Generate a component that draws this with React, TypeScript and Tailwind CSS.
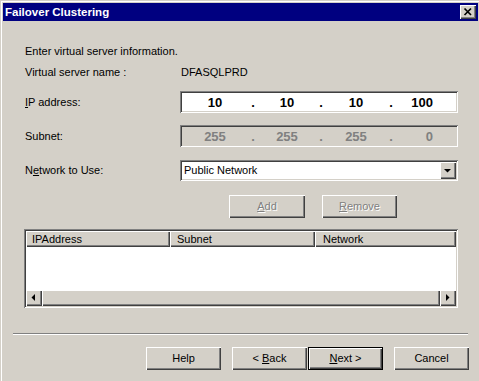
const raised = 'shadow-[inset_1px_1px_0_#fff,inset_-1px_-1px_0_#404040,inset_-2px_-2px_0_#808080]'
const sunken = 'shadow-[inset_1px_1px_0_#808080,inset_-1px_-1px_0_#fff,inset_2px_2px_0_#404040,inset_-2px_-2px_0_#d4d0c8]'
const emboss = 'text-[#808080] [text-shadow:1px_1px_0_#fff]'

function IpBox({ values, disabled }: { values: string[]; disabled?: boolean }) {
  return (
    <div
      className={`h-[22px] grid grid-cols-[66px_10px_58px_10px_60px_10px_1fr] items-center px-[2px] font-bold text-[13px] leading-none ${sunken} ${
        disabled ? 'bg-[#d4d0c8] text-[#808080]' : 'bg-white text-black'
      }`}
    >
      <span className="text-center">{values[0]}</span>
      <span className="text-center">.</span>
      <span className="text-center">{values[1]}</span>
      <span className="text-center">.</span>
      <span className="text-center">{values[2]}</span>
      <span className="text-center">.</span>
      <span className="text-right pr-[23px]">{values[3]}</span>
    </div>
  )
}

function Btn({ children, disabled, def, w = 'w-[75px]' }: { children: React.ReactNode; disabled?: boolean; def?: boolean; w?: string }) {
  const inner = (
    <div className={`h-full w-full flex items-center justify-center ${raised} ${disabled ? emboss : ''}`}>{children}</div>
  )
  if (def) return <div className={`h-[23px] ${w} border border-black`}>{inner}</div>
  return <div className={`h-[23px] ${w}`}>{inner}</div>
}

function ArrowBtn({ dir }: { dir: 'left' | 'right' | 'down' }) {
  const pts = dir === 'left' ? '9,4 9,11 5.5,7.5' : dir === 'right' ? '6,4 6,11 9.5,7.5' : '4,7 11,7 7.5,10.5'
  return (
    <div className={`w-[16px] h-full shrink-0 bg-[#d4d0c8] ${raised}`}>
      <svg width="16" height="16" viewBox="0 0 16 16" className="block">
        <polygon points={pts} fill="#000" />
      </svg>
    </div>
  )
}

export default function App() {
  return (
    <div className="w-[479px] h-[381px] overflow-hidden bg-[#d4d0c8] text-black text-[11px] leading-[13px] font-['Liberation_Sans',Arial,sans-serif] shadow-[inset_1px_1px_0_#d4d0c8,inset_2px_2px_0_#fff] flex flex-col">
      {/* title bar */}
      <div className="mt-[3px] ml-[3px] mr-[1px] h-[18px] bg-[#000080] flex items-center pl-[2px] pr-[2px]">
        <span className="text-white font-bold text-[11.5px]">Failover Clustering</span>
        <div className={`ml-auto w-[16px] h-[14px] bg-[#d4d0c8] ${raised}`}>
          <svg width="16" height="14" viewBox="0 0 16 14" className="block">
            <path d="M4.5 3.5 L11 10 M11 3.5 L4.5 10" stroke="#000" strokeWidth="1.7" />
          </svg>
        </div>
      </div>

      <div className="pl-[25px] pr-[21px] flex flex-col">
        <div className="mt-[24px]">Enter virtual server information.</div>

        <div className="mt-[8px] grid grid-cols-[155px_1fr]">
          <span>Virtual server name :</span>
          <span className="pl-[1px]">DFASQLPRD</span>
        </div>

        <div className="mt-[12px] grid grid-cols-[155px_1fr] items-center">
          <span>
            <u className="underline-offset-[1px]">I</u>P address:
          </span>
          <IpBox values={['10', '10', '10', '100']} />
        </div>

        <div className="mt-[12px] grid grid-cols-[155px_1fr] items-center">
          <span>Subnet:</span>
          <IpBox values={['255', '255', '255', '0']} disabled />
        </div>

        <div className="mt-[13px] grid grid-cols-[155px_1fr] items-center">
          <span>
            N<u className="underline-offset-[1px]">e</u>twork to Use:
          </span>
          <div className={`h-[21px] bg-white flex items-stretch p-[2px] ${sunken}`}>
            <span className="flex-1 flex items-center pl-[2px]">Public Network</span>
            <ArrowBtn dir="down" />
          </div>
        </div>

        <div className="mt-[14px] flex pl-[204px] gap-[17px]">
          <Btn disabled w="w-[76px]">
            <span>
              <u>A</u>dd
            </span>
          </Btn>
          <Btn disabled>
            <span>
              <u>R</u>emove
            </span>
          </Btn>
        </div>

        {/* list view */}
        <div className={`mt-[11px] -ml-[1px] h-[79px] bg-white p-[2px] flex flex-col ${sunken}`}>
          <div className="h-[16px] flex bg-[#d4d0c8] shrink-0">
            <div className={`w-[144px] pl-[6px] flex items-center ${raised}`}>IPAddress</div>
            <div className={`w-[145px] pl-[7px] flex items-center ${raised}`}>Subnet</div>
            <div className={`flex-1 pl-[8px] flex items-center ${raised}`}>Network</div>
          </div>
          <div className="flex-1" />
          <div className="h-[16px] flex shrink-0">
            <ArrowBtn dir="left" />
            <div className={`flex-1 bg-[#d4d0c8] ${raised}`} />
            <ArrowBtn dir="right" />
          </div>
        </div>
      </div>

      {/* separator */}
      <div className="mt-[25px] ml-[13px] mr-[11px] h-[2px] border-t border-t-[#808080] border-b border-b-white" />

      <div className="mt-[12px] pr-[10px] flex justify-end">
        <Btn>Help</Btn>
        <div className="w-[11px]" />
        <Btn>
          <span>
            &lt; <u>B</u>ack
          </span>
        </Btn>
        <div className="w-[1px]" />
        <Btn def>
          <span>
            <u>N</u>ext &gt;
          </span>
        </Btn>
        <div className="w-[11px]" />
        <Btn>Cancel</Btn>
      </div>
    </div>
  )
}
